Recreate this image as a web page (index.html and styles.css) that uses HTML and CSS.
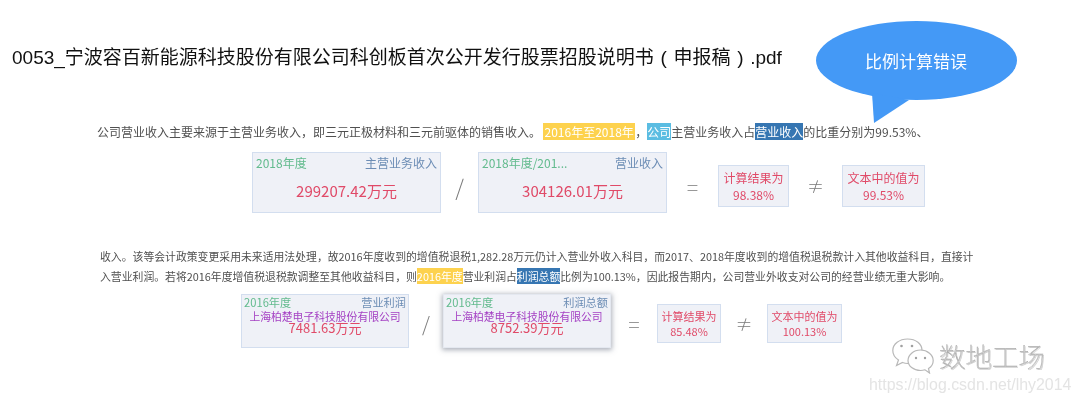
FILE: index.html
```html
<!DOCTYPE html>
<html lang="zh">
<head>
<meta charset="utf-8">
<title>比例计算错误</title>
<link rel="stylesheet" href="styles.css">
</head>
<body>
<main class="slide">
  <h1 class="title">0053_宁波容百新能源科技股份有限公司科创板首次公开发行股票招股说明书 ( 申报稿 ) .pdf</h1>

  <section class="case case-one">
    <p class="para">公司营业收入主要来源于主营业务收入，即三元正极材料和三元前驱体的销售收入。<mark class="hl-year">2016年至2018年</mark>，<mark class="hl-co">公司</mark>主营业务收入占<mark class="hl-item">营业收入</mark>的比重分别为99.53%、</p>
    <div class="formula">
      <div class="card card-a">
        <div class="card-head"><span class="year">2018年度</span><span class="item">主营业务收入</span></div>
        <div class="amount">299207.42万元</div>
      </div>
      <span class="sym sym-slash">/</span>
      <div class="card card-a">
        <div class="card-head"><span class="year">2018年度/201...</span><span class="item">营业收入</span></div>
        <div class="amount">304126.01万元</div>
      </div>
      <span class="sym sym-eq">=</span>
      <div class="res res-a"><span>计算结果为</span><span>98.38%</span></div>
      <span class="sym sym-ne">≠</span>
      <div class="res res-b"><span>文本中的值为</span><span>99.53%</span></div>
    </div>
  </section>

  <section class="case case-two">
    <p class="para para-two">收入。该等会计政策变更采用未来适用法处理，故2016年度收到的增值税退税1,282.28万元仍计入营业外收入科目，而2017、2018年度收到的增值税退税款计入其他收益科目，直接计<br>入营业利润。若将2016年度增值税退税款调整至其他收益科目，则<mark class="hl-year hl-flush">2016年度</mark>营业利润占<mark class="hl-item">利润总额</mark>比例为100.13%，因此报告期内，公司营业外收支对公司的经营业绩无重大影响。</p>
    <div class="formula formula-two">
      <div class="card card-c">
        <div class="card-head card-head-small"><span class="year">2016年度</span><span class="item">营业利润</span></div>
        <div class="company">上海柏楚电子科技股份有限公司</div>
        <div class="amount amount-tight">7481.63万元</div>
      </div>
      <span class="sym sym-slash2">/</span>
      <div class="card card-c card-raised">
        <div class="card-head card-head-small"><span class="year">2016年度</span><span class="item">利润总额</span></div>
        <div class="company">上海柏楚电子科技股份有限公司</div>
        <div class="amount amount-tight">8752.39万元</div>
      </div>
      <span class="sym sym-eq2">=</span>
      <div class="res res-c"><span>计算结果为</span><span>85.48%</span></div>
      <span class="sym sym-ne2">≠</span>
      <div class="res res-d"><span>文本中的值为</span><span>100.13%</span></div>
    </div>
  </section>

  <div class="bubble">
    <svg class="bubble-shape" width="201" height="104" viewBox="0 0 201 104" aria-hidden="true">
      <ellipse cx="100.500" cy="39.500" rx="100.500" ry="39.500" fill="#4499f6"/>
      <path d="M56 72 L58 102 L93 79 Z" fill="#4499f6"/>
    </svg>
    <span class="bubble-text">比例计算错误</span>
  </div>

  <div class="mark">
    <svg class="wechat" width="42" height="36" viewBox="0 0 42 36" aria-hidden="true">
      <g fill="#fff" stroke="#b8b8b8" stroke-width="1.200">
        <path d="M15.500 1C7.500 1 .8 6 .8 12.500C.8 16.500 3 19.800 6.500 22L4.500 27.500L10.500 24.500C12.500 25.200 14 25.500 15.500 25.500C24 25.500 30 20 30 12.500C30 6 24 1 15.500 1Z"/>
        <path d="M28.500 12C21.500 12 16 17 16 22.500C16 28 21.500 32.500 28.500 32.500C30 32.500 31.500 32.300 33 31.800L37.500 35L36.500 30.500C39.500 28.800 41.200 26 41.200 22.500C41.200 17 35.500 12 28.500 12Z"/>
      </g>
      <g fill="#a0a0a0">
        <circle cx="9.500" cy="8" r="1.300"/><circle cx="20" cy="8" r="1.300"/>
        <circle cx="24" cy="20" r="1.200"/><circle cx="33" cy="20" r="1.200"/>
      </g>
    </svg>
    <span class="mark-name">数地工场</span>
  </div>
  <div class="url">https://blog.csdn.net/lhy2014</div>
</main>
</body>
</html>
```
FILE: styles.css
```css
* { box-sizing: border-box; }
html, body { margin: 0; padding: 0; background: #fff; }
.slide {
  position: relative;
  width: 1080px;
  height: 404px;
  overflow: hidden;
  font-family: "Liberation Sans", "Noto Sans CJK SC", sans-serif;
  filter: blur(0.4px);
}
.title {
  margin: 0;
  padding: 45px 0 0 12px;
  height: 122px;
  font-size: 19px;
  line-height: 25px;
  font-weight: 400;
  word-spacing: 1.400px;
  color: #111;
  white-space: nowrap;
}
.case { font-family: "Noto Sans CJK SC", "Liberation Sans", sans-serif; }
.para {
  margin: 0;
  padding-left: 97px;
  font-size: 12px;
  line-height: 20px;
  height: 21px;
  color: #505050;
  white-space: nowrap;
}
.para-two { padding-left: 100px; height: 40px; font-size: 10.850px; }
mark { color: #fff; }
.hl-year { background: #fdd24e; margin-left: 2px; padding: 0 1.500px; }
.hl-flush { margin-left: 0; padding: 0; }
.hl-co { background: #5bbde2; }
.hl-item { background: #3676b2; }

.formula { display: flex; align-items: center; padding: 9px 0 0 252px; }
.formula-two { padding: 8px 0 0 241px; }
.case-two { margin-top: 33px; }

.card {
  background: #eff1f7;
  border: 1.500px solid #d3deef;
  padding: 2px 3px;
}
.card-a { width: 189px; height: 61px; }
.card-c { width: 168px; height: 54px; padding: 0 2px; }
.card-raised { box-shadow: 0 1px 5px 1px rgba(90, 100, 120, .5); border-color: #e4e8f0; }
.card-head { display: flex; justify-content: space-between; font-size: 12px; line-height: 16px; }
.card-head-small { font-size: 11.200px; line-height: 15px; }
.year { color: #63bb8e; }
.item { color: #6c8db5; }
.amount { text-align: center; color: #e04a68; font-size: 15px; line-height: 20px; margin-top: 10px; }
.amount-tight { margin-top: 0; font-size: 13px; line-height: 12px; }
.company { text-align: center; color: #a542c4; font-size: 10.800px; line-height: 12px; white-space: nowrap; }

.sym {
  text-align: center;
  color: #7a7a7a;
  font-family: "Noto Sans CJK SC", sans-serif;
  font-weight: 300;
  line-height: 1;
  margin-top: 6px;
}
.sym-slash { width: 37px; font-size: 22px; }
.sym-eq { width: 51px; font-size: 22px; font-weight: 100; }
.sym-ne { width: 53px; font-size: 17px; }
.sym-slash2 { width: 34px; font-size: 20px; }
.sym-eq2 { width: 46px; font-size: 22px; font-weight: 100; margin-top: 4px; }
.sym-ne2 { width: 46px; font-size: 17px; margin-top: 4px; }

.res {
  display: flex;
  flex-direction: column;
  align-items: center;
  justify-content: center;
  background: #eff1f7;
  border: 1.500px solid #d3deef;
  color: #e04a68;
  font-size: 12px;
  line-height: 17px;
  white-space: nowrap;
  margin-top: 7px;
}
.res-a { width: 71px; height: 42px; }
.res-b { width: 83px; height: 42px; }
.res-c { width: 64px; height: 39px; margin-top: 5px; font-size: 11px; line-height: 15px; }
.res-d { width: 75px; height: 39px; margin-top: 5px; font-size: 11px; line-height: 15px; }

.bubble { position: absolute; left: 816px; top: 21px; width: 201px; height: 104px; }
.bubble-shape { display: block; }
.bubble-text {
  position: absolute;
  left: 49px;
  top: 27px;
  color: #fff;
  font-family: "Noto Sans CJK SC", sans-serif;
  font-size: 17px;
  line-height: 26px;
  white-space: nowrap;
}
.mark { position: absolute; left: 892px; top: 338px; display: flex; align-items: center; gap: 5px; }
.wechat { display: block; }
.mark-name {
  font-family: "Noto Sans CJK SC", sans-serif;
  font-size: 26.500px;
  line-height: 32px;
  font-weight: 100;
  color: #fff;
  -webkit-text-stroke: 0.5px #a8a8a8;
  text-shadow: 1px 1px 0 #d0d0d0;
  white-space: nowrap;
}
.url {
  position: absolute;
  left: 869px;
  top: 375px;
  font-size: 15.900px;
  line-height: 20px;
  color: #e4e4e4;
  white-space: nowrap;
}
```
